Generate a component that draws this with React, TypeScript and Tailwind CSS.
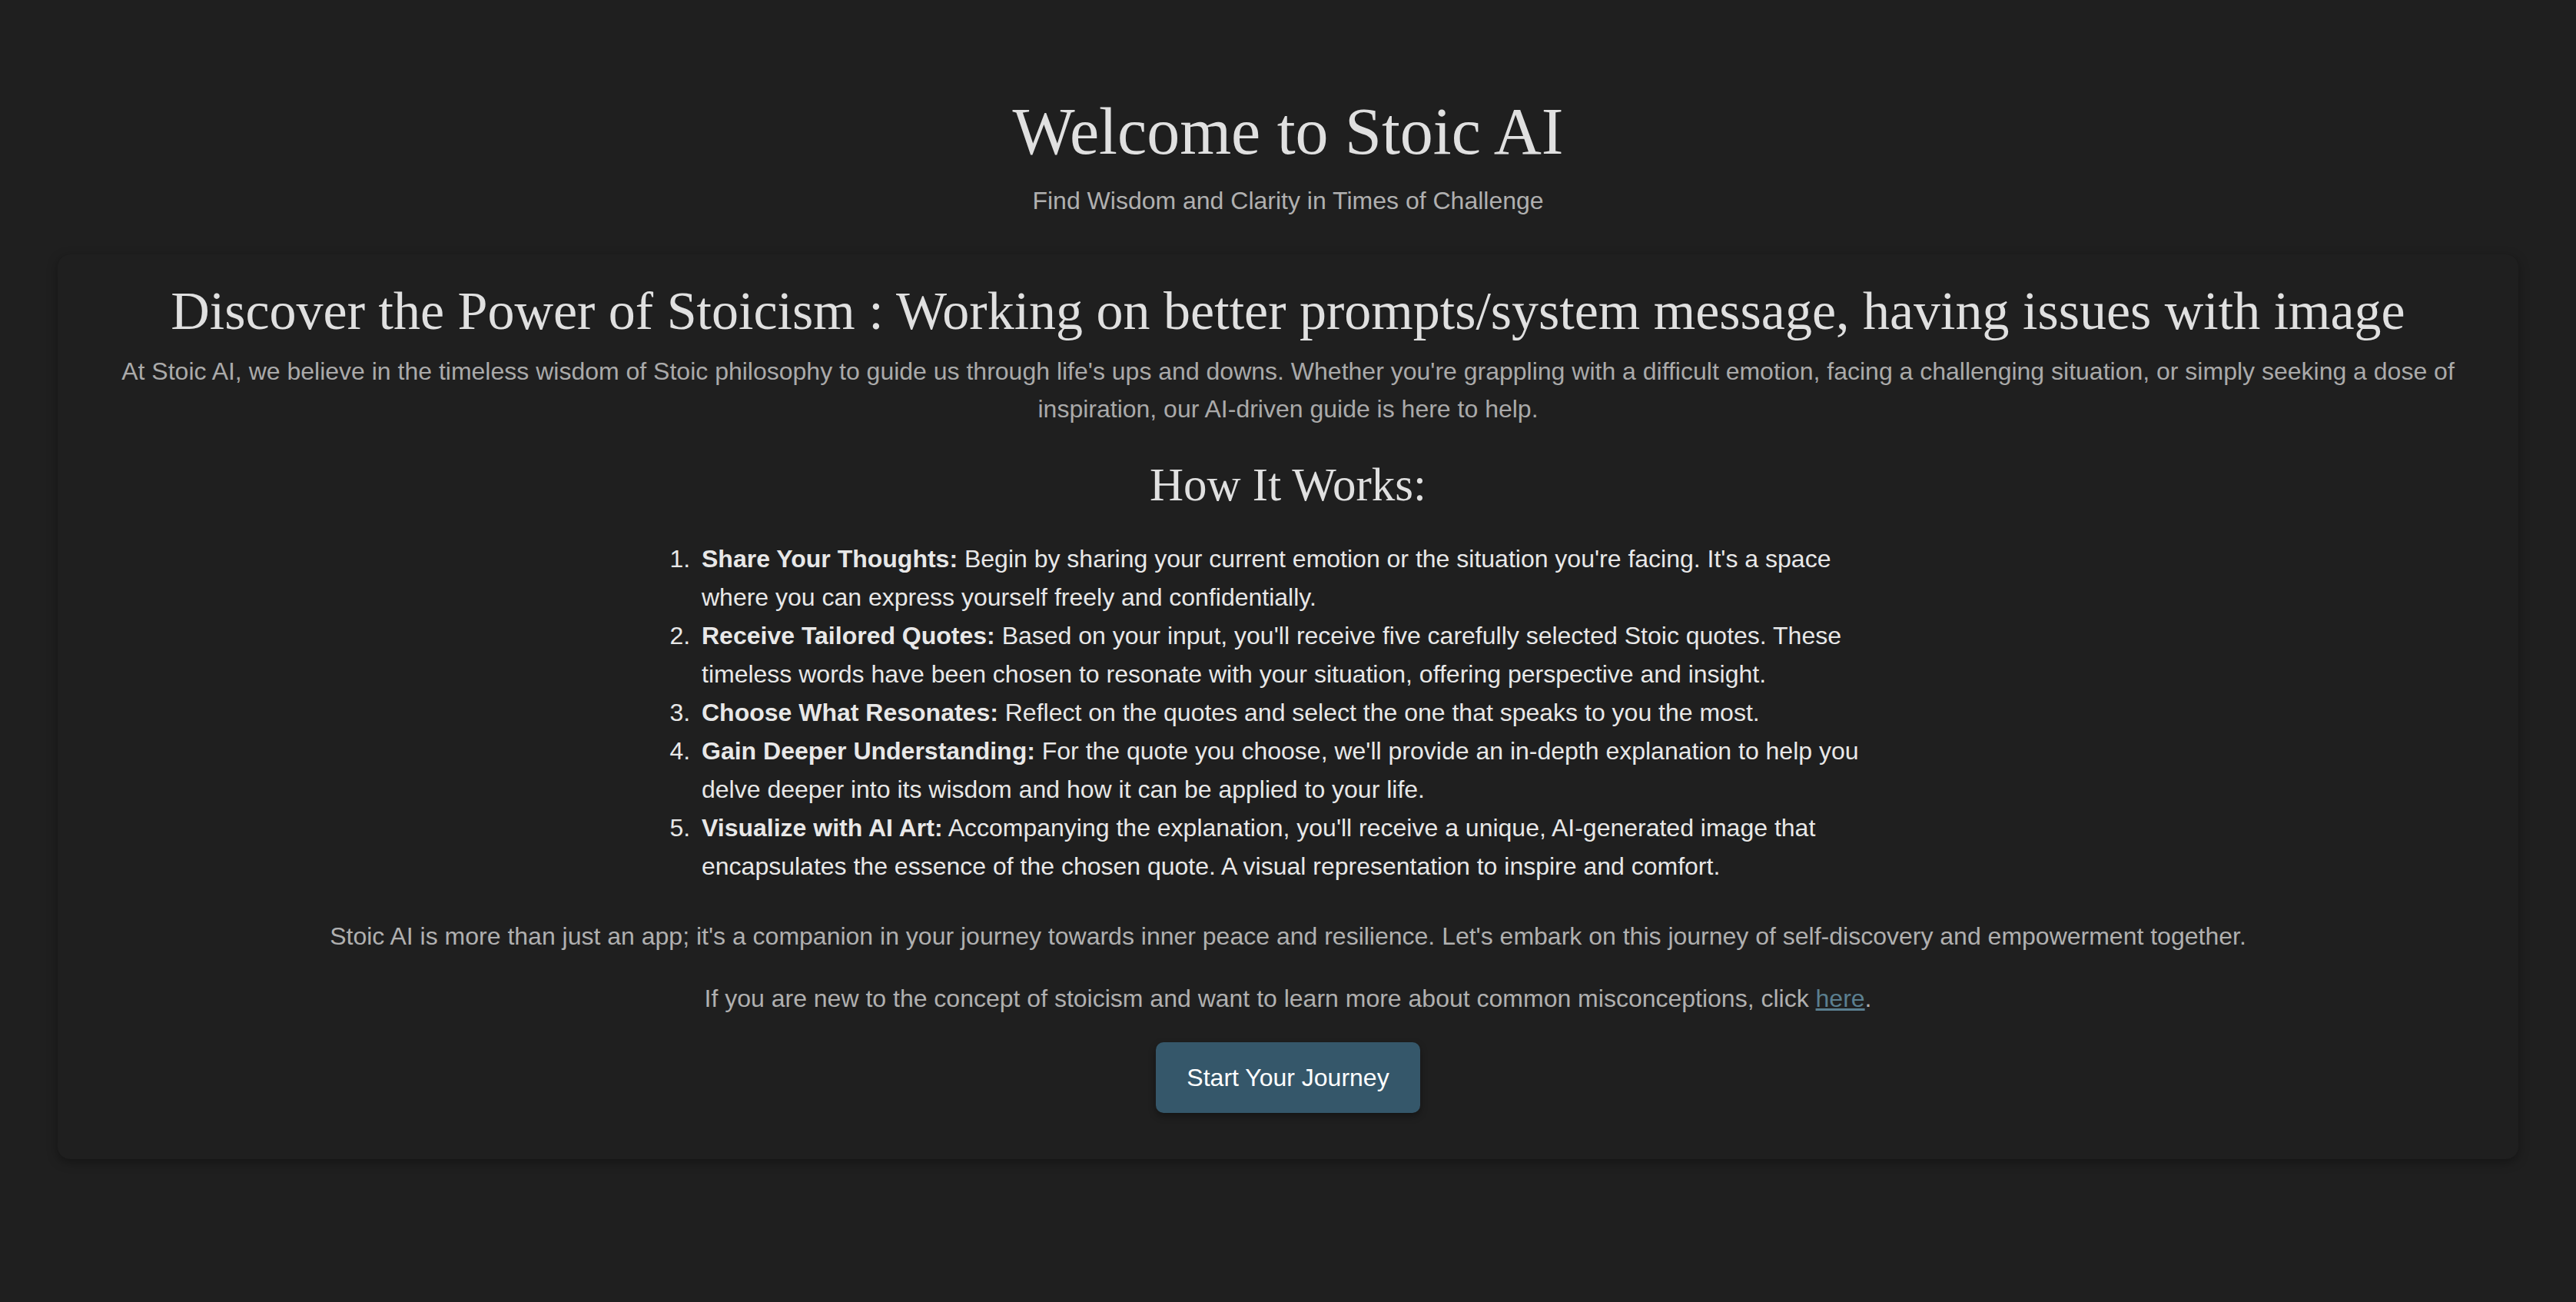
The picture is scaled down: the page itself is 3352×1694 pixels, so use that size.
const steps = [
  {
    title: "Share Your Thoughts:",
    text: "Begin by sharing your current emotion or the situation you're facing. It's a space where you can express yourself freely and confidentially.",
  },
  {
    title: "Receive Tailored Quotes:",
    text: "Based on your input, you'll receive five carefully selected Stoic quotes. These timeless words have been chosen to resonate with your situation, offering perspective and insight.",
  },
  {
    title: "Choose What Resonates:",
    text: "Reflect on the quotes and select the one that speaks to you the most.",
  },
  {
    title: "Gain Deeper Understanding:",
    text: "For the quote you choose, we'll provide an in-depth explanation to help you delve deeper into its wisdom and how it can be applied to your life.",
  },
  {
    title: "Visualize with AI Art:",
    text: "Accompanying the explanation, you'll receive a unique, AI-generated image that encapsulates the essence of the chosen quote. A visual representation to inspire and comfort.",
  },
];

export default function App() {
  return (
    <div className="min-h-screen bg-[#1f1f1f] font-['Liberation_Sans',Arial,sans-serif] text-[#e0e0e0] pt-[120px] pb-[150px]">
      <header className="text-center">
        <h1 className="font-['Liberation_Serif',Georgia,serif] text-[86px] leading-[102px] text-[#e0e0e0]">
          Welcome to Stoic AI
        </h1>
        <p className="mt-[15px] text-[32px] leading-[49px] text-[#b0b0b0]">
          Find Wisdom and Clarity in Times of Challenge
        </p>
      </header>

      <main className="mx-[75px] mt-[45px] rounded-[16px] bg-[#1f1f1f] px-[43px] pt-[34px] pb-[60px] shadow-[0_4px_14px_rgba(0,0,0,0.35)]">
        <h2 className="text-center font-['Liberation_Serif',Georgia,serif] text-[70px] leading-[80px] text-[#e0e0e0]">
          Discover the Power of Stoicism : Working on better prompts/system message, having issues with image
        </h2>
        <p className="mt-[14px] text-center text-[32px] leading-[49px] text-[#aaaaaa]">
          At Stoic AI, we believe in the timeless wisdom of Stoic philosophy to guide us through life's ups and downs. Whether you're grappling with a difficult emotion, facing a challenging situation, or simply seeking a dose of inspiration, our AI-driven guide is here to help.
        </p>

        <h3 className="mt-[38px] text-center font-['Liberation_Serif',Georgia,serif] text-[61px] leading-[72px] text-[#e0e0e0]">
          How It Works:
        </h3>
        <ol className="mt-[35px] ml-[703px] w-[1627px] list-decimal pl-[86px] text-left text-[32px] leading-[50px] text-[#e8e8e8]">
          {steps.map((s) => (
            <li key={s.title} className="pl-[6px]">
              <strong className="font-bold">{s.title}</strong> {s.text}
            </li>
          ))}
        </ol>

        <p className="mt-[42px] text-center text-[32px] leading-[49px] text-[#b0b0b0]">
          Stoic AI is more than just an app; it's a companion in your journey towards inner peace and resilience. Let's embark on this journey of self-discovery and empowerment together.
        </p>
        <p className="mt-[32px] text-center text-[32px] leading-[49px] text-[#b0b0b0]">
          If you are new to the concept of stoicism and want to learn more about common misconceptions, click{" "}
          <a href="#" className="text-[#5b7f90] underline">
            here
          </a>
          .
        </p>
        <div className="mt-[32px] flex justify-center">
          <button className="h-[92px] rounded-[10px] bg-[#35576a] px-[40px] text-[32px] text-white shadow-[0_4px_10px_rgba(0,0,0,0.35)]">
            Start Your Journey
          </button>
        </div>
      </main>
    </div>
  );
}
